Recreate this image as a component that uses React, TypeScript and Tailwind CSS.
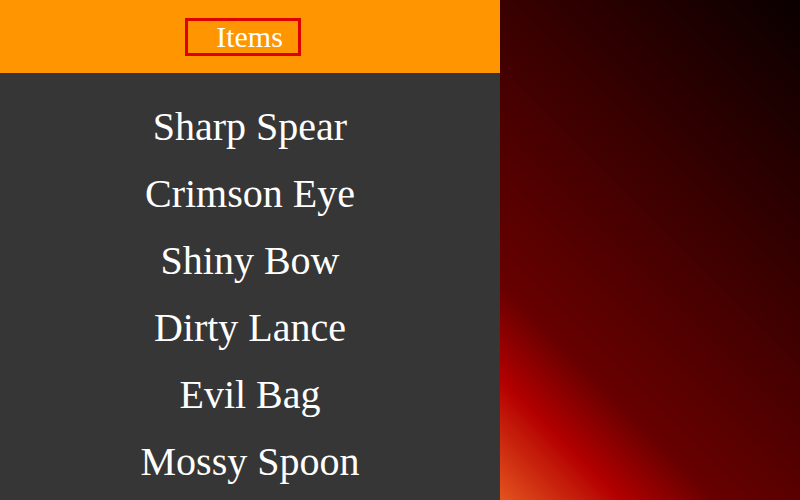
const ITEMS = ["Sharp Spear", "Crimson Eye", "Shiny Bow", "Dirty Lance", "Evil Bag", "Mossy Spoon"];

export default function App() {
  return (
    <div className="flex w-[800px] h-[500px] overflow-hidden font-['Liberation_Serif',serif] text-white">
      {/* menu */}
      <div className="flex flex-col w-[500px] h-full bg-[#363636]">
        <div className="flex items-center justify-center h-[73px] bg-[#ff9500] shrink-0">
          <div className="flex items-center h-[38px] border-[3px] border-[#dd0000] pl-[28px] pr-[15px] -ml-[14px] text-[30px] leading-none">
            Items
          </div>
        </div>
        <ul className="flex flex-col pt-[20px]">
          {ITEMS.map(item => (
            <li key={item} className="h-[67px] leading-[67px] text-center text-[40px]">
              {item}
            </li>
          ))}
        </ul>
      </div>

      {/* backdrop */}
      <div className="flex-1 h-full bg-[linear-gradient(45deg,#e4531f_0%,#b40000_15%,#680000_27%,#3a0000_62%,#0a0000_100%)]" />
    </div>
  );
}
